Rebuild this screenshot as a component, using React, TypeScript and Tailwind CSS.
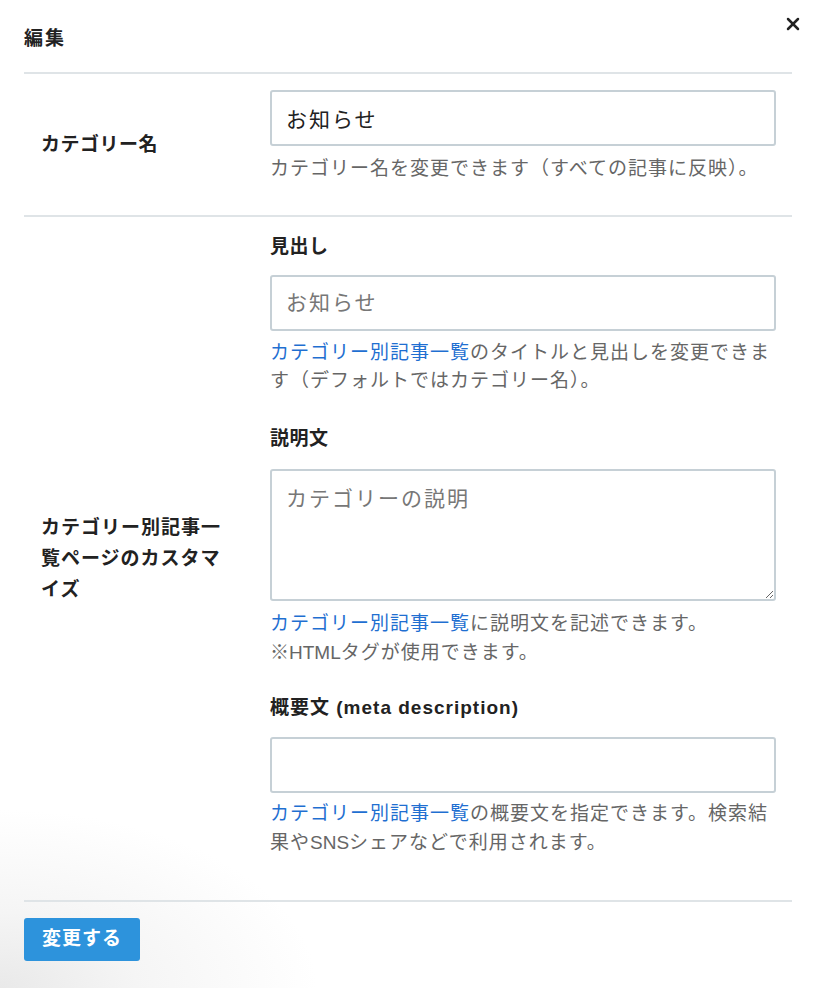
import { X } from 'lucide-react'

const font = { fontFamily: '"Liberation Sans", "Noto Sans CJK JP", sans-serif' }

function Help({ link, children }: { link?: string; children: React.ReactNode }) {
  return (
    <p className="text-[19px] leading-[28px] tracking-[1px] text-[#666]">
      {link && <a className="text-[#1f6fd1]">{link}</a>}
      {children}
    </p>
  )
}

function Heading({ children }: { children: React.ReactNode }) {
  return <h3 className="text-[19px] leading-[28px] tracking-[0.5px] font-bold text-[#222]">{children}</h3>
}

// latin runs sit tighter than the kana around them
function Latin({ children }: { children: React.ReactNode }) {
  return <span className="tracking-[0px]">{children}</span>
}

const inputCls =
  'block w-full h-[56px] rounded-[3px] border-2 border-[#c6d0d6] bg-white px-[14px] text-[21px] tracking-[2px] text-[#222] placeholder:text-[#777] outline-none'

export default function App() {
  return (
    <div className="relative min-h-[988px] bg-white overflow-hidden" style={font}>
      <div className="pointer-events-none absolute left-0 bottom-0 h-[180px] w-[320px] bg-[radial-gradient(ellipse_at_bottom_left,#e9e9e9_0%,#f5f5f5_30%,rgba(255,255,255,0)_70%)]" />

      <button className="absolute top-[14px] right-[17px] text-[#222]">
        <X className="h-[20px] w-[20px]" strokeWidth={3} />
      </button>

      <div className="relative pl-[24px] pr-[28px]">
        <div className="pt-[27px] pb-[21px]">
          <h2 className="text-[19px] leading-[24px] tracking-[2px] font-bold text-[#222]">編集</h2>
        </div>

        <div className="border-t-2 border-[#dfe4e7] grid grid-cols-[246px_1fr]">
          <div className="flex items-center pl-[17px]">
            <span className="text-[19px] leading-[31px] tracking-[0.5px] font-bold text-[#222]">カテゴリー名</span>
          </div>
          <div className="pt-[16px] pb-[32px] pr-[16px]">
            <input className={inputCls} defaultValue="お知らせ" />
            <div className="mt-[9px]">
              <Help>カテゴリー名を変更できます（すべての記事に反映）。</Help>
            </div>
          </div>
        </div>

        <div className="border-t-2 border-[#dfe4e7] grid grid-cols-[246px_1fr]">
          <div className="flex items-center pl-[17px]">
            <span className="w-[190px] text-[19px] leading-[31px] tracking-[1px] font-bold text-[#222]">
              カテゴリー別記事一覧ページのカスタマイズ
            </span>
          </div>
          <div className="pt-[16px] pb-[43px] pr-[16px]">
            <Heading>見出し</Heading>
            <div className="mt-[14px]">
              <input className={inputCls} placeholder="お知らせ" />
            </div>
            <div className="mt-[8px]">
              <Help link="カテゴリー別記事一覧">のタイトルと見出しを変更できます（デフォルトではカテゴリー名）。</Help>
            </div>

            <div className="mt-[30px]">
              <Heading>説明文</Heading>
            </div>
            <div className="mt-[16px]">
              <textarea
                className="block w-full h-[132px] rounded-[3px] border-2 border-[#c6d0d6] bg-white px-[14px] py-[12px] text-[21px] tracking-[2px] text-[#222] placeholder:text-[#777] outline-none resize-y"
                placeholder="カテゴリーの説明"
              />
            </div>
            <div className="mt-[8px]">
              <p className="text-[19px] leading-[29px] tracking-[1px] text-[#666]">
                <a className="text-[#1f6fd1]">カテゴリー別記事一覧</a>に説明文を記述できます。
                <br />
                <Latin>※HTML</Latin>タグが使用できます。
              </p>
            </div>

            <div className="mt-[27px]">
              <h3 className="text-[19px] leading-[28px] tracking-[1px] font-bold text-[#222]">
                概要文 (meta description)
              </h3>
            </div>
            <div className="mt-[15px]">
              <input className={inputCls} />
            </div>
            <div className="mt-[6px]">
              <p className="text-[19px] leading-[29px] tracking-[1px] text-[#666]">
                <a className="text-[#1f6fd1]">カテゴリー別記事一覧</a>の概要文を指定できます。検索結果や<Latin>SNS</Latin>シェアなどで利用されます。
              </p>
            </div>
          </div>
        </div>

        <div className="border-t-2 border-[#dfe4e7] pt-[16px] pb-[27px]">
          <button className="h-[43px] w-[116px] rounded-[3px] bg-[#2d93dc] text-[19px] tracking-[1px] font-bold text-white">
            変更する
          </button>
        </div>
      </div>
    </div>
  )
}
